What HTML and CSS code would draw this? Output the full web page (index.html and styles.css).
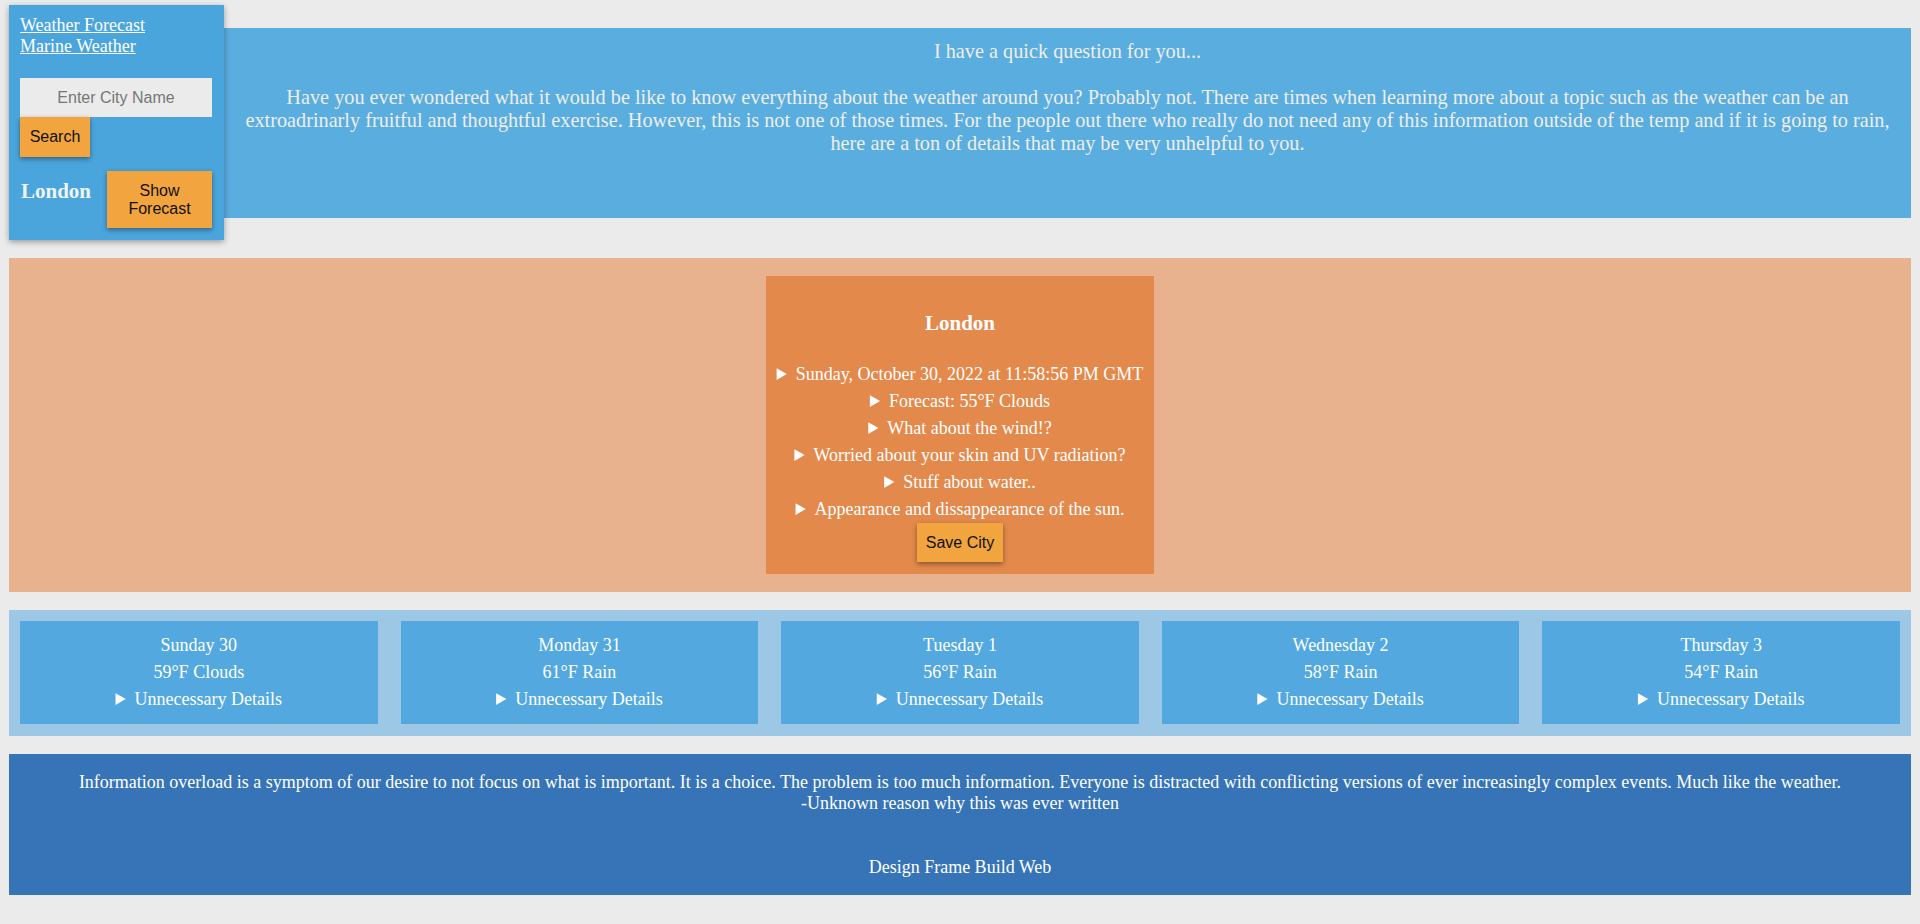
FILE: index.html
```html
<!DOCTYPE html>
<html lang="en">
<head>
<meta charset="utf-8">
<title>Weather Forecast</title>
<link rel="stylesheet" href="styles.css">
</head>
<body>
<div class="top-row">
  <aside class="sidebar">
    <nav class="nav">
      <a href="#">Weather Forecast</a>
      <a href="#">Marine Weather</a>
    </nav>
    <div class="search">
      <input class="city-input" type="text" placeholder="Enter City Name">
      <button class="btn btn-search">Search</button>
    </div>
    <div class="saved">
      <span class="saved-city">London</span>
      <button class="btn btn-show">Show Forecast</button>
    </div>
  </aside>
  <header class="intro">
    <p class="intro-q">I have a quick question for you...</p>
    <p class="intro-text">Have you ever wondered what it would be like to know everything about the weather around you? Probably not. There are times when learning more about a topic such as the weather can be an extroadrinarly fruitful and thoughtful exercise. However, this is not one of those times. For the people out there who really do not need any of this information outside of the temp and if it is going to rain, here are a ton of details that may be very unhelpful to you.</p>
  </header>
</div>

<section class="current">
  <div class="current-card">
    <h2 class="current-city">London</h2>
    <details><summary>Sunday, October 30, 2022 at 11:58:56 PM GMT</summary></details>
    <details><summary>Forecast: 55°F Clouds</summary></details>
    <details><summary>What about the wind!?</summary></details>
    <details><summary>Worried about your skin and UV radiation?</summary></details>
    <details><summary>Stuff about water..</summary></details>
    <details><summary>Appearance and dissappearance of the sun.</summary></details>
    <button class="btn btn-save">Save City</button>
  </div>
</section>

<section class="week">
  <div class="day">
    <div>Sunday 30</div>
    <div>59°F Clouds</div>
    <details><summary>Unnecessary Details</summary></details>
  </div>
  <div class="day">
    <div>Monday 31</div>
    <div>61°F Rain</div>
    <details><summary>Unnecessary Details</summary></details>
  </div>
  <div class="day">
    <div>Tuesday 1</div>
    <div>56°F Rain</div>
    <details><summary>Unnecessary Details</summary></details>
  </div>
  <div class="day">
    <div>Wednesday 2</div>
    <div>58°F Rain</div>
    <details><summary>Unnecessary Details</summary></details>
  </div>
  <div class="day">
    <div>Thursday 3</div>
    <div>54°F Rain</div>
    <details><summary>Unnecessary Details</summary></details>
  </div>
</section>

<footer class="footer">
  <p class="quote">Information overload is a symptom of our desire to not focus on what is important. It is a choice. The problem is too much information. Everyone is distracted with conflicting versions of ever increasingly complex events. Much like the weather.<br>-Unknown reason why this was ever written</p>
  <p class="credit">Design Frame Build Web</p>
</footer>
</body>
</html>
```

FILE: styles.css
```css
* { box-sizing: border-box; }

html { background: #ebebeb; }

body {
  margin: 0;
  padding: 5px 9px 29px;
  background: #ebebeb;
  font-family: "Liberation Serif", "Times New Roman", serif;
  color: #fff;
}

.top-row {
  display: flex;
  align-items: flex-start;
}

.sidebar {
  width: 215px;
  flex: none;
  background: #4aa5dd;
  padding: 10px 12px 12px 11px;
  box-shadow: 0 2px 6px rgba(0, 0, 0, 0.35);
  position: relative;
  z-index: 1;
}

.nav {
  display: flex;
  flex-direction: column;
  font-size: 18px;
  line-height: 21px;
}

.nav a {
  color: #fff;
  text-decoration: underline;
  align-self: flex-start;
}

.search {
  margin-top: 21px;
  display: flex;
  flex-direction: column;
  align-items: flex-start;
}

.city-input {
  width: 192px;
  height: 39px;
  border: none;
  background: #ebebeb;
  font-family: "Liberation Sans", Arial, sans-serif;
  font-size: 16px;
  text-align: center;
  color: #333;
  padding: 0;
  outline: none;
}

.city-input::placeholder { color: #777; }

.btn {
  border: none;
  background: #f2a43f;
  color: #111;
  font-family: "Liberation Sans", Arial, sans-serif;
  font-size: 16px;
  line-height: 18px;
  box-shadow: 0 2px 5px rgba(0, 0, 0, 0.4);
  cursor: pointer;
  padding: 0;
}

.btn-search {
  width: 70px;
  height: 40px;
}

.saved {
  margin-top: 14px;
  display: flex;
  justify-content: space-between;
  align-items: flex-start;
  padding-left: 1px;
}

.saved-city {
  font-size: 21px;
  line-height: 24px;
  padding-top: 8px;
  font-weight: bold;
  color: #eef4fa;
}

.btn-show {
  width: 105px;
  height: 57px;
  padding: 0 8px;
}

.intro {
  flex: 1;
  margin-top: 23px;
  height: 190px;
  background: #5aaddf;
  color: #eeeeee;
  text-align: center;
  font-size: 20.25px;
  line-height: 23px;
  padding: 12px 16px 0;
}

.intro p { margin: 0; }

.intro-q { margin-bottom: 23px !important; }

.current {
  margin-top: 18px;
  background: #e7b28d;
  padding: 18px 0;
  display: flex;
  justify-content: center;
}

.current-card {
  background: #e3894c;
  padding: 0 11px 12px;
  text-align: center;
  font-size: 18px;
  line-height: 27px;
  display: flex;
  flex-direction: column;
  align-items: center;
}

.current-city {
  margin: 35px 0 26px;
  font-size: 21px;
  line-height: 24px;
  font-weight: bold;
}

details { width: 100%; }

summary {
  cursor: pointer;
}

.btn-save {
  width: 86px;
  height: 39px;
}

.week {
  margin-top: 18px;
  background: #9cc7e5;
  padding: 11px 11px 12px;
  display: grid;
  grid-template-columns: repeat(5, 1fr);
  gap: 23px;
}

.day {
  background: #53a9df;
  padding: 11px;
  text-align: center;
  font-size: 18px;
  line-height: 27px;
  height: 103px;
}

.footer {
  margin-top: 18px;
  background: #3674b7;
  text-align: center;
  font-size: 18px;
  line-height: 21px;
  padding: 18px 20px 18px;
  height: 141px;
}

.footer p { margin: 0; }

.credit { margin-top: 43px !important; }
```
